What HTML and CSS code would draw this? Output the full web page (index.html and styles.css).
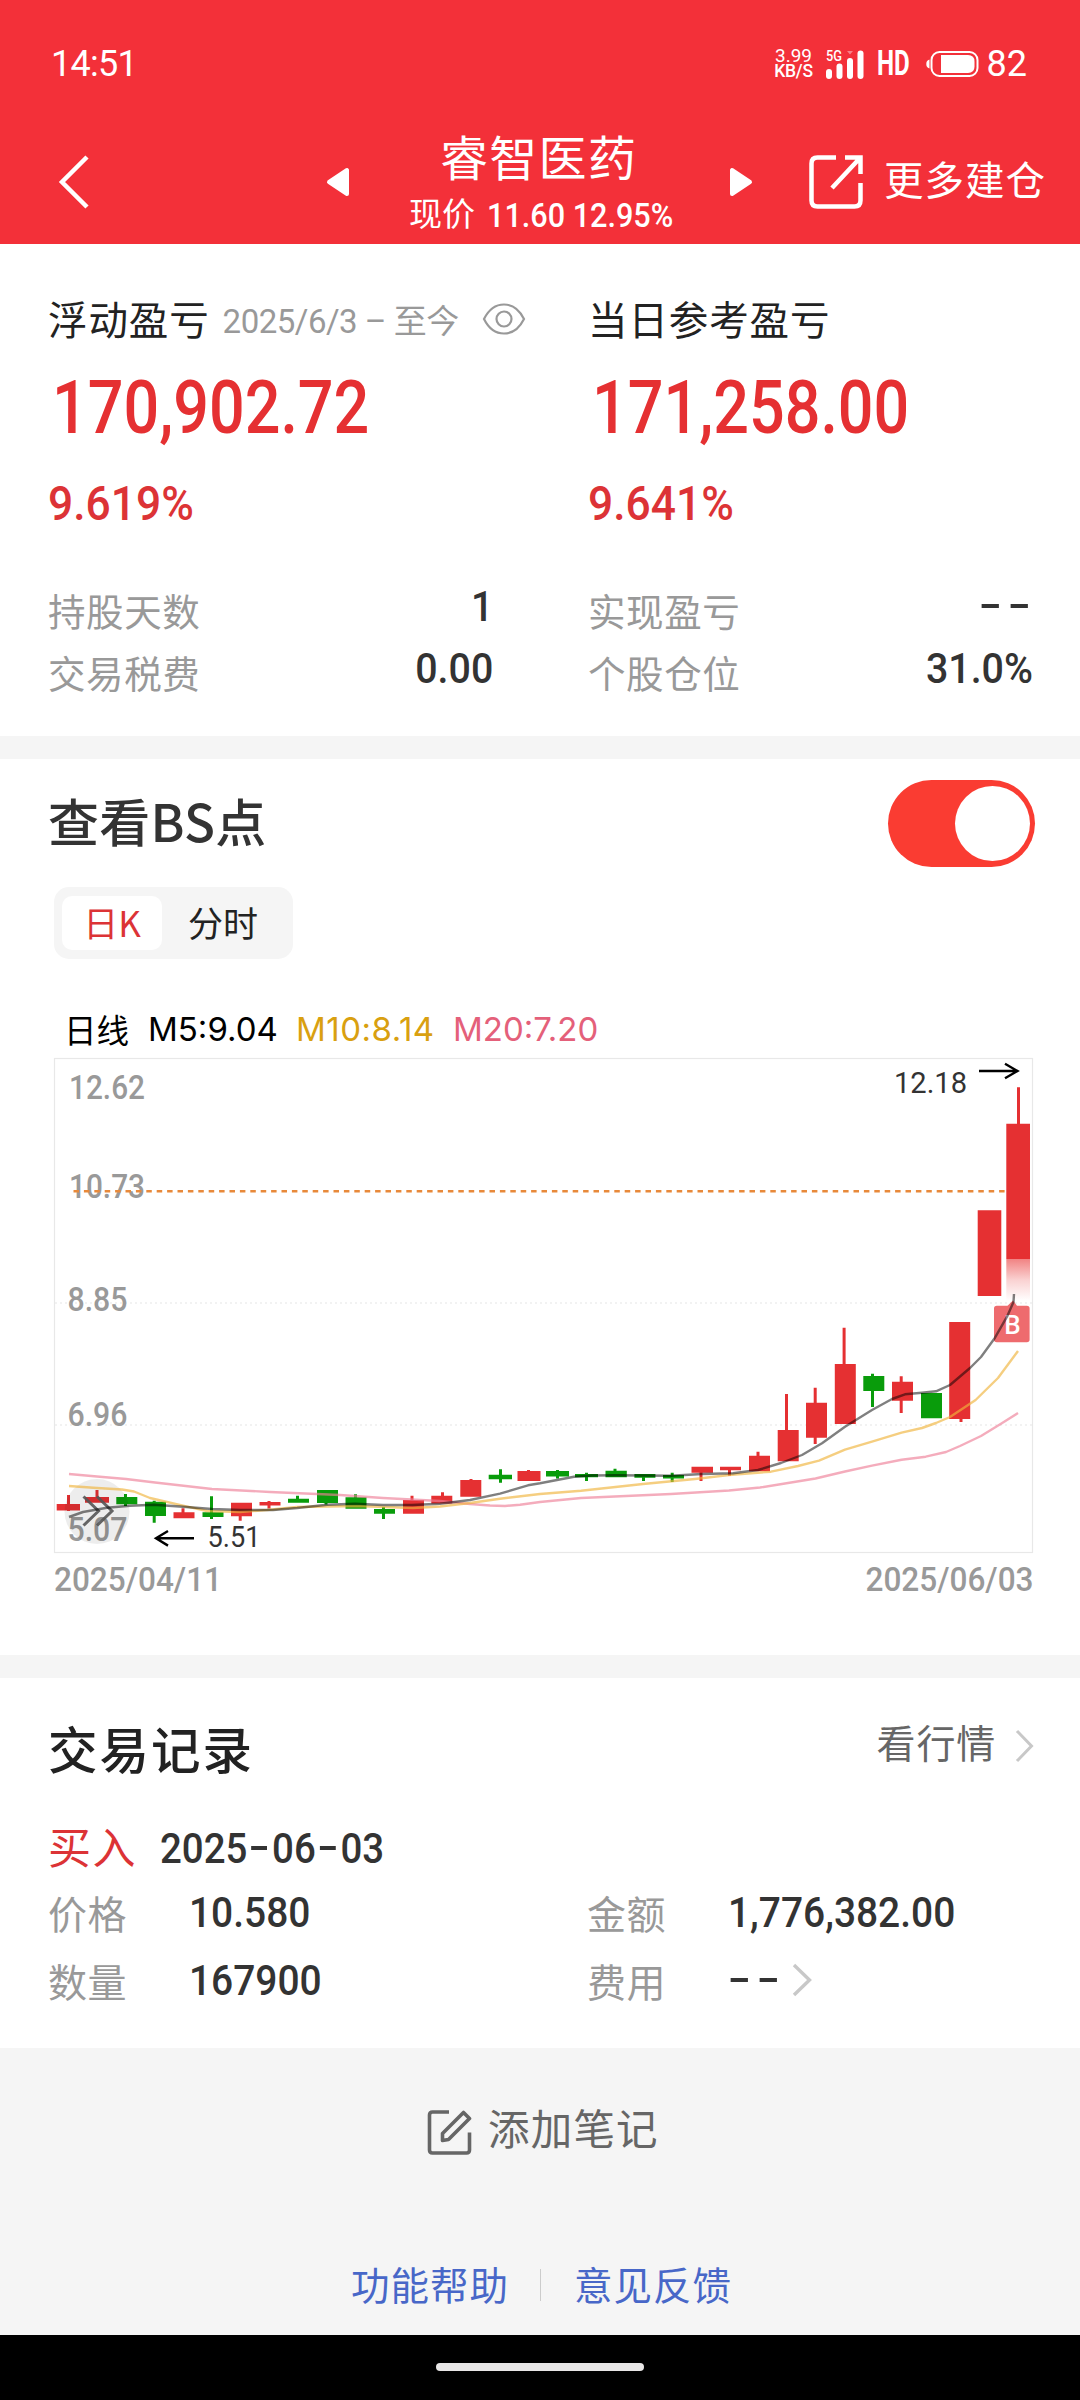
FILE: index.html
```html
<!DOCTYPE html>
<html lang="zh-CN">
<head>
<meta charset="utf-8">
<title>睿智医药</title>
<link rel="stylesheet" href="styles.css">
</head>
<body>
<header class="top">
  <div class="status">
    <span class="clock">14:51</span>
    <div class="status-right">
      <div class="speed"><span>3.99</span><span class="unit">KB/S</span></div>
      <svg class="signal" width="38" height="30" viewBox="0 0 38 30">
        <text x="0" y="12" class="net" textLength="16" lengthAdjust="spacingAndGlyphs">5G</text>
        <g fill="#fff"><rect x="0" y="20" width="6" height="10" rx="3"/><rect x="10.500" y="14.500" width="6" height="15.500" rx="3"/><rect x="21" y="9" width="6" height="21" rx="3"/><rect x="31.500" y="1.500" width="6" height="28.500" rx="3"/><path d="M21 2h6l-3 3.500z" opacity=".4"/></g>
      </svg>
      <span class="hd">HD</span>
      <svg class="battery" width="53" height="28" viewBox="0 0 53 28">
        <path d="M3.500 9.500v9C1 18 .300 16 .300 14s.700-4 3.200-4.500z" fill="#fff"/>
        <rect x="5.500" y="2" width="46" height="24" rx="8" fill="none" stroke="#fff" stroke-width="2"/>
        <path d="M15 5h27q6.500 0 6.500 6.500v5q0 6.500-6.500 6.500H15z" fill="#fff"/>
      </svg>
      <span class="level">82</span>
    </div>
  </div>
  <nav class="nav">
    <svg class="back" width="32" height="56" viewBox="0 0 32 56"><path d="M30 3L5 28l25 25" fill="none" stroke="#fff" stroke-width="4.500"/></svg>
    <svg class="prev" width="26" height="32" viewBox="0 0 26 32"><path d="M22 4v24L4 16z" fill="#fff" stroke="#fff" stroke-width="4" stroke-linejoin="round"/></svg>
    <div class="stock">
      <div class="stock-name">睿智医药</div>
      <div class="stock-price"><span>现价</span><span class="num">11.60 12.95%</span></div>
    </div>
    <svg class="next" width="26" height="32" viewBox="0 0 26 32"><path d="M4 4v24l18-12z" fill="#fff" stroke="#fff" stroke-width="4" stroke-linejoin="round"/></svg>
    <svg class="share" width="54" height="54" viewBox="0 0 54 54"><path d="M27 2.500H8.500q-6 0-6 6v37q0 6 6 6h37q6 0 6-6V28M36 2.500h15.500V19M51 3L23 33" fill="none" stroke="#fff" stroke-width="4.500"/></svg>
    <span class="more">更多建仓</span>
  </nav>
</header>

<section class="card summary">
  <div class="col">
    <div class="col-title"><span>浮动盈亏</span><span class="range">2025/6/3 – 至今</span>
      <svg width="44" height="34" viewBox="0 0 44 34" fill="none" stroke="#999" stroke-width="2.200"><path d="M2 17C7 7 14 2.500 22 2.500S37 7 42 17C37 27 30 31.500 22 31.500S7 27 2 17z"/><circle cx="22" cy="17" r="7.500"/></svg>
    </div>
    <div class="amount"><span>170,902.72</span></div>
    <div class="percent"><span>9.619%</span></div>
    <div class="item first"><span>持股天数</span><span class="val">1</span></div>
    <div class="item"><span>交易税费</span><span class="val">0.00</span></div>
  </div>
  <div class="col">
    <div class="col-title"><span>当日参考盈亏</span></div>
    <div class="amount"><span>171,258.00</span></div>
    <div class="percent"><span>9.641%</span></div>
    <div class="item first"><span>实现盈亏</span><span class="val"><span class="none right">--</span></span></div>
    <div class="item"><span>个股仓位</span><span class="val">31.0%</span></div>
  </div>
</section>

<section class="card points">
  <div class="points-head"><h2>查看BS点</h2><div class="toggle"><i></i></div></div>
  <div class="tabs"><span class="tab active">日K</span><span class="tab">分时</span></div>
  <div class="legend"><span class="period">日线</span><span class="m5">M5:9.04</span><span class="m10">M10:8.14</span><span class="m20">M20:7.20</span></div>
  <svg class="chart" width="1080" height="550" viewBox="0 1050 1080 550">
    <defs><linearGradient id="fade" x1="0" y1="0" x2="0" y2="1"><stop offset="0" stop-color="#e83030" stop-opacity=".6"/><stop offset=".5" stop-color="#e83030" stop-opacity=".22"/><stop offset="1" stop-color="#e83030" stop-opacity="0"/></linearGradient></defs>
    <rect x="54.500" y="1058.500" width="978" height="494" fill="none" stroke="#e8e8e8" stroke-width="1.200"/>
    <g stroke="#e6e6e6" stroke-width="1.200" stroke-dasharray="2 3"><path d="M55 1303H1033M55 1425H1033"/></g>
    <g class="axis">
      <text x="69" y="1099" textLength="76" lengthAdjust="spacingAndGlyphs">12.62</text>
      <text x="69" y="1198" textLength="76" lengthAdjust="spacingAndGlyphs">10.73</text>
      <text x="67.500" y="1310.500" textLength="60" lengthAdjust="spacingAndGlyphs">8.85</text>
      <text x="67.500" y="1426" textLength="60" lengthAdjust="spacingAndGlyphs">6.96</text>
      <text x="67.500" y="1540.500" textLength="60" lengthAdjust="spacingAndGlyphs">5.07</text>
      <text x="54" y="1590.500" textLength="168" lengthAdjust="spacingAndGlyphs">2025/04/11</text>
      <text x="865.500" y="1590.500" textLength="168" lengthAdjust="spacingAndGlyphs">2025/06/03</text>
    </g>
    <path d="M73.500 1191.300H1006" stroke="#e8893a" stroke-width="2.600" stroke-dasharray="5.500 4.900"/>
    <g fill="#e53032">
      <path d="M56.700 1504h23.300v6.500H56.700zM67 1495h3v16h-3zM85 1497h24v5.700H85zM95.500 1490h3v10h-3zM173.500 1512.300h21v6h-21zM181.500 1508.300h3v6h-3zM231 1502.700h21v13.500h-21zM238.700 1514h3v6.700h-3zM259.500 1502h21v3.500h-21zM267.500 1501h3v7.500h-3zM403 1500h21v13.700h-21zM410.500 1495.700h3v6h-3zM431.300 1495.700h21v7.800h-21zM441 1492.300h3v6h-3zM460.300 1480h21v16.700h-21zM469.500 1479h3v3h-3zM517.500 1471h23v10h-23zM527 1470h3v3h-3z"/>
      <path d="M691.500 1466.700h21.500v6h-21.500zM699.500 1470h3v11h-3zM720 1466.700h21v3.500h-21zM728 1469h3v6.700h-3zM749 1455.700h21v15.600h-21zM756.500 1451.700h3v6h-3zM777.700 1430h21v31.300h-21zM785 1394h3v40h-3zM806 1402.700h21v35h-21zM813.700 1387.700h3V1444h-3zM834.800 1364h21v60h-21zM842.600 1327.700h3v40h-3zM892 1381.700h21v19h-21zM899.700 1376.300h3V1413h-3zM949.200 1322h21v97h-21zM959.500 1418h3v4h-3zM977.700 1210.300h23.600V1296h-23.600zM1006.300 1123.700h23.700V1259h-23.700zM1017 1087.300h3V1130h-3z"/>
    </g>
    <rect x="1006.300" y="1259" width="23.700" height="42" fill="url(#fade)"/>
    <g fill="#099c0b">
      <path d="M116.300 1497h21v7.300h-21zM124 1494h3v12h-3zM145 1501.700h21V1516h-21zM152.700 1500.700h3v22h-3zM202.500 1512.300h21v4.700h-21zM210 1496.300h3V1519h-3zM288 1498.700h21v4h-21zM296 1495.700h3v6h-3zM317 1490h21v13h-21zM324.500 1502h3v2.500h-3zM345.500 1497.300h21v11.400h-21zM354 1494.300h3v6h-3zM374 1509h21v4.700h-21zM382 1507h3v12h-3zM503.500 1474.700"/>
      <path d="M488.700 1474.700h23.300v4.600h-23.300zM499 1469.300h3v13.400h-3zM546 1471h23v5.400h-23zM556 1470h3v8.500h-3zM575 1474h23v3.200h-23zM585 1472.700h3v8.300h-3zM605.500 1470.700h21.300v6.500h-21.300zM613.500 1468.700h3v5h-3zM634.400 1474h21v3.700h-21zM642 1475h3v6h-3zM663 1475h21v3.400h-21zM670.700 1472.700h3v9.300h-3zM863.300 1376h21v15h-21zM871 1373.700h3V1407h-3zM921 1393h21v25.300h-21z"/>
    </g>
    <path d="M994 1308.500q0-2.800 2.800-2.800h10.700l5.500-5.200 4 5.200h9.800q2.800 0 2.800 2.800v31q0 2.800-2.800 2.800h-30q-2.800 0-2.800-2.800z" fill="#e83236" opacity=".72"/>
    <text class="buy" x="1012.500" y="1334" text-anchor="middle">B</text>
    <circle cx="97" cy="1511.500" r="32.500" fill="#000" opacity=".07"/>
    <path d="M83.500 1496.500L98.500 1511l-15 14.500M97 1496.500L112 1511l-15 14.500" fill="none" stroke="#555" stroke-width="3" opacity=".9"/>
    <g fill="none" stroke-width="2.400" stroke-linejoin="round">
      <polyline class="ma20" points="69,1474 97,1476.500 126,1479 155,1482.500 212,1489 270,1492 340,1495 383,1498 440,1501 470,1504 490,1505.500 505,1506 520,1504.700 540,1502 581,1498 671,1494 729,1490.500 760,1487.500 788,1483 815.500,1478.500 845,1471.500 872,1465.700 901.600,1459.700 925.700,1456.700 946,1452 960,1446 981,1436 1001,1423.700 1018,1413"/>
      <polyline class="ma10" points="69,1486 97,1488 122,1489.500 134,1491.500 150,1498 183,1505.700 207,1511 240,1512 267,1510 297,1507 357,1506 413,1508 440,1506.500 470,1503 500,1498.700 540,1494 581,1490.700 643,1484 695,1479 729,1475 771,1471.700 798,1466 819,1460.700 845,1449.700 872,1441.700 901.600,1432.700 922,1428 936,1423 950,1417 975.600,1400 998,1378 1018,1351"/>
      <polyline class="ma5" points="69,1517 83,1512 107,1507.700 130,1505.700 154,1504.700 183,1506.700 212,1509 240,1510 273,1510 297,1508 327,1504.700 355,1503.700 383,1505 412,1505 440,1503.700 470,1500 500,1493.700 528,1485.300 540,1483.300 574,1476.700 592,1475.500 616,1475.300 671,1475.700 702,1474 733,1473.300 758,1470 781,1463 802,1455 822,1443.300 845,1426.700 872,1410 892,1399 905,1394.300 922,1392.700 936,1391.300 950,1385 970,1368 981,1357 995,1337.700 1007,1316.700 1013.500,1302 1014,1294"/>
    </g>
    <g fill="none" stroke="#000" stroke-width="2.400"><path d="M194 1538.300H156M168 1531l-12 7.300 12 7.300M979 1071h38M1005 1063.700l12.500 7.300-12.500 7.300"/></g>
    <g class="mark">
      <text x="207.500" y="1546.500" textLength="53" lengthAdjust="spacingAndGlyphs">5.51</text>
      <text x="894" y="1092.700" textLength="73" lengthAdjust="spacingAndGlyphs">12.18</text>
    </g>
  </svg>
</section>

<section class="card trades">
  <div class="trades-head"><h2>交易记录</h2><div class="quote"><span>看行情</span><svg width="19" height="34" viewBox="0 0 19 34"><path d="M2 2l14.500 15L2 32" fill="none" stroke="#c8c8c8" stroke-width="3"/></svg></div></div>
  <div class="deal"><span class="side">买入</span><span class="day">2025<b>-</b>06<b>-</b>03</span></div>
  <div class="facts">
    <span class="key">价格</span><span class="fact"><span class="fig">10.580</span></span><span class="key">金额</span><span class="fact"><span class="fig">1,776,382.00</span></span>
    <span class="key">数量</span><span class="fact"><span class="fig">167900</span></span><span class="key">费用</span><span class="fact fee"><span class="none">--</span><svg width="20" height="34" viewBox="0 0 20 34"><path d="M2 2l15.500 15L2 32" fill="none" stroke="#c8c8c8" stroke-width="3.400"/></svg></span>
  </div>
</section>

<footer class="foot">
  <div class="note">
    <svg width="45" height="46" viewBox="0 0 45 46" fill="none" stroke="#666" stroke-width="3.600" stroke-linejoin="round"><path d="M22 3H5.500Q2.500 3 2.500 6v35q0 3 3 3h34q3 0 3-3V23.500"/><path d="M15.500 24.500L36.500 3.500l6 6L21.500 30.500l-6 1z" stroke-width="3.600"/></svg>
    <span>添加笔记</span>
  </div>
  <div class="links"><a>功能帮助</a><i></i><a>意见反馈</a></div>
</footer>
<div class="gesture"><i></i></div>
</body>
</html>
```
FILE: styles.css
```css
* { box-sizing: border-box; margin: 0; padding: 0; }
body {
  width: 1080px;
  height: 2400px;
  display: flex;
  flex-direction: column;
  background: #f5f5f5;
  color: #222;
  font-family: Roboto, "Noto Sans CJK SC", sans-serif;
  overflow: hidden;
  white-space: nowrap;
}
svg { display: block; flex: none; }
h2 { font-weight: 500; }

.top { height: 244px; background: #f33039; color: #fff; }
.status { height: 120px; padding: 8px 53px 0 51px; display: flex; align-items: center; justify-content: space-between; }
.clock { font-size: 36px; letter-spacing: -.7px; }
.status-right { display: flex; align-items: center; }
.speed { width: 42px; display: flex; flex-direction: column; align-items: center; font-size: 19px; line-height: 15px; letter-spacing: 0; margin-right: 11px; }
.speed .unit { font-size: 17.500px; line-height: 17px; font-weight: 500; letter-spacing: -.3px; }
.net { font-size: 14px; font-weight: 500; fill: #fff; }
.hd { font-size: 35px; font-weight: 700; line-height: 40px; width: 34px; margin-left: 13px; transform: scaleX(.69); transform-origin: left; }
.battery { margin-left: 15px; }
.level { font-size: 36px; line-height: 40px; margin-left: 8px; }

.nav { height: 124px; display: flex; align-items: center; padding-left: 57px; }
.prev { margin-left: 236px; }
.stock { width: 270px; height: 124px; margin-left: 58px; padding-top: 12px; }
.stock-name { font-size: 48px; line-height: 56px; letter-spacing: 1.3px; padding-left: 31px; font-weight: 400; }
.stock-price { display: flex; align-items: center; font-size: 33px; line-height: 40px; margin-top: 7px; }
.stock-price .num { font-size: 34px; font-weight: 500; margin-left: 12px; transform: scaleX(.9); transform-origin: left; }
.next { margin-left: 49px; }
.share { margin-left: 55px; }
.more { font-size: 39.500px; letter-spacing: 1px; margin-left: 21px; line-height: 50px; }

.card { background: #fff; padding: 0 49px 0 48px; }
.summary { height: 492px; padding-top: 49px; display: grid; grid-template-columns: 443px 443px; column-gap: 97px; }
.col-title { height: 48px; display: flex; align-items: center; font-size: 39.500px; letter-spacing: .9px; }
.range { font-size: 33px; color: #999; margin: 3px 0 0 13px; letter-spacing: -.5px; }
.col-title svg { margin: 3px 0 0 23px; }
.amount { height: 90px; line-height: 90px; margin-top: 21px; font-size: 75px; font-weight: 500; color: #e53032; }
.amount span { display: inline-block; transform: scaleX(.838); transform-origin: left; margin-left: 4px; }
.percent { height: 60px; line-height: 60px; margin-top: 22px; font-size: 49px; font-weight: 500; color: #dc3336; }
.percent span { display: inline-block; transform: scaleX(.905); transform-origin: left; margin-left: 0; }
.item { height: 62px; display: flex; align-items: center; justify-content: space-between; font-size: 37.500px; letter-spacing: .6px; color: #999; }
.item.first { margin-top: 44px; }
.val { font-size: 43px; font-weight: 500; color: #333; letter-spacing: 0; margin-bottom: 7px; transform: scaleX(.915); transform-origin: right; margin-right: -2px; }
.none { display: inline-block; letter-spacing: 4px; transform: translateY(-2px) scaleX(1.56); transform-origin: left; }
.none.right { transform: translateY(-2px) scaleX(1.7); transform-origin: right; letter-spacing: 4px; margin-right: -4px; }

.points { height: 896px; margin-top: 23px; padding-top: 21px; }
.points-head { height: 87px; display: flex; align-items: center; justify-content: space-between; color: #333; }
.points-head h2 { font-family: "Noto Sans CJK SC", sans-serif; font-size: 51px; line-height: 60px; margin-bottom: 7px; letter-spacing: .3px; }
.toggle { width: 147px; height: 87px; margin-right: -4px; border-radius: 44px; background: #fa3c32; display: flex; justify-content: flex-end; align-items: center; padding-right: 5px; }
.toggle i { width: 75px; height: 75px; border-radius: 50%; background: #fff; }
.tabs { width: 239px; height: 72px; margin: 20px 0 0 6px; background: #f5f5f5; border-radius: 15px; display: flex; align-items: center; padding-left: 8px; font-size: 35px; font-family: "Noto Sans CJK SC", sans-serif; }
.tab { height: 54px; line-height: 52px; border-radius: 10px; margin-left: 26px; }
.tab.active { width: 100px; margin-left: 0; background: #fff; color: #dc3336; text-align: center; }
.legend { height: 40px; line-height: 40px; margin-top: 50px; display: flex; padding-left: 16px; font-size: 33px; color: #000; font-family: Inter, "Noto Sans CJK SC", sans-serif; }
.period { width: 84px; font-size: 32.500px; font-family: "Noto Sans CJK SC", sans-serif; }
.m5 { width: 148px; }
.m10 { width: 157px; color: #d9a010; letter-spacing: .5px; }
.m20 { color: #e4607a; }
.chart { margin: 1px 0 0 -48px; }
.axis text { font-size: 34px; font-weight: 500; fill: #999; }
.mark text { font-size: 29.500px; fill: #333; }
.buy { font-size: 26px; font-weight: 500; fill: #fff; }
.ma5 { stroke: #000; opacity: .5; }
.ma10 { stroke: #efb43c; opacity: .65; }
.ma20 { stroke: #ee8098; opacity: .65; }

.trades { height: 370px; margin-top: 23px; padding-top: 40px; }
.trades-head { height: 60px; display: flex; align-items: center; justify-content: space-between; }
.trades-head h2 { font-size: 49.500px; letter-spacing: 2px; line-height: 60px; margin-top: 8px; }
.quote { display: flex; align-items: center; font-size: 39px; letter-spacing: .8px; color: #666; margin-right: -3px; margin-bottom: 4px; }
.quote span { line-height: 50px; margin-bottom: 2px; }
.quote svg { margin-left: 19px; }
.deal { height: 60px; margin-top: 37px; display: flex; align-items: center; }
.side { font-size: 43px; letter-spacing: 1.500px; color: #dc3336; }
.day { font-size: 42px; font-weight: 500; color: #333; margin: 6px 0 0 23px; transform: scaleX(.915); transform-origin: left; }
.day b { display: inline-block; width: 27px; text-align: center; font-weight: 500; transform: translateY(-2px) scaleX(1.6); }
.facts { margin-top: 3px; display: grid; grid-template-columns: 141px 398px 141px auto; grid-auto-rows: 68px; align-items: center; }
.key { font-size: 39px; letter-spacing: .6px; color: #999; }
.fact { font-size: 43px; font-weight: 500; color: #333; }
.fig { display: inline-block; transform: scaleX(.905); transform-origin: left; }
.fee { display: flex; align-items: center; }
.fee svg { margin-left: 27px; }

.foot { flex: 1; }
.note { height: 60px; margin-top: 50px; display: flex; align-items: center; padding-left: 427px; font-size: 41.500px; letter-spacing: 1.200px; color: #666; }
.note svg { margin-top: 8px; }
.note span { margin: 6px 0 0 16px; line-height: 60px; }
.links { height: 60px; margin-top: 95px; display: flex; align-items: center; padding-left: 351px; font-size: 38.500px; letter-spacing: 1px; color: #4867c8; }
.links i { width: 1px; height: 32px; background: #ccc; margin: 4px 33px 0 31px; }
.gesture { height: 65px; background: #000; display: flex; justify-content: center; padding-top: 28px; }
.gesture i { width: 208px; height: 8px; border-radius: 4px; background: #e9e7e7; }
```
